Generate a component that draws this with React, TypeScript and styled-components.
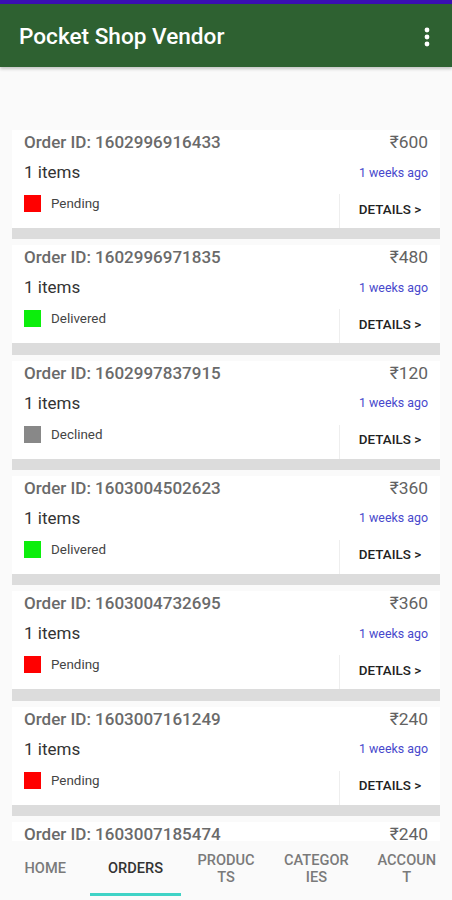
import React from 'react';
import styled, { createGlobalStyle } from 'styled-components';

const GlobalStyle = createGlobalStyle`
    html, body {
        margin: 0;
        padding: 0;
        background: #fafafa;
        font-family: Roboto, "Liberation Sans", sans-serif;
    }
    * { box-sizing: border-box; }
`

const Screen = styled.div`
    width: 452px;
    height: 900px;
    display: flex;
    flex-direction: column;
    background: #fafafa;
    overflow: hidden;
`

const StatusBar = styled.div`
    height: 4px;
    background: #3a0fb3;
    flex-shrink: 0;
`

const AppBar = styled.header`
    height: 63px;
    flex-shrink: 0;
    background: #2e6131;
    display: flex;
    align-items: center;
    justify-content: space-between;
    padding: 2px 21px 0 19px;
    box-shadow: 0 2px 3px rgba(0, 0, 0, 0.22);
    position: relative;
    z-index: 1;
`

const Title = styled.h1`
    margin: 0;
    color: #fff;
    font-size: 22.6px;
    font-weight: 500;
`

const List = styled.main`
    flex: 1;
    overflow: hidden;
    padding: 57px 12px 0;
`

const Card = styled.div`
    background: #fff;
`

const Row = styled.div<{ $gap: number }>`
    display: flex;
    justify-content: space-between;
    align-items: center;
    height: 24px;
    padding: 0 12px;
    margin-top: ${({ $gap }) => $gap}px;
`

const OrderId = styled.span`
    font-size: 17px;
    font-weight: 500;
    color: #6a6a6a;
`

const Price = styled.span`
    font-size: 17.4px;
    color: #626262;
`

const Items = styled.span`
    font-size: 17px;
    color: #333;
`

const Ago = styled.span`
    font-size: 12.4px;
    color: #4848cc;
`

const Footer = styled.div`
    display: flex;
    justify-content: space-between;
    height: 34px;
    margin-top: 10px;
`

const Status = styled.div`
    display: flex;
    align-items: center;
    gap: 10px;
    padding: 1px 0 0 12px;
    height: 18px;
    font-size: 13.4px;
    color: #444;
`

const Swatch = styled.span<{ $color: string }>`
    width: 17px;
    height: 17px;
    background: ${({ $color }) => $color};
`

const DetailsButton = styled.button`
    width: 101px;
    height: 100%;
    border: none;
    border-left: 1px solid #eeeeee;
    background: transparent;
    padding: 0 0 4px;
    font-family: inherit;
    font-size: 13.4px;
    font-weight: 500;
    color: #222;
    cursor: pointer;
`

const Separator = styled.div`
    height: 11.33px;
    background: #dcdcdc;
`

const BottomNav = styled.nav`
    height: 59px;
    flex-shrink: 0;
    background: #fafafa;
    display: grid;
    grid-template-columns: repeat(5, 1fr);
    padding-bottom: 4px;
`

const Tab = styled.div<{ $active?: boolean }>`
    display: flex;
    align-items: center;
    justify-content: center;
    text-align: center;
    font-size: 14.6px;
    font-weight: 500;
    line-height: 17px;
    color: ${({ $active }) => ($active ? '#333' : '#7a7a7a')};
    border-bottom: 3px solid ${({ $active }) => ($active ? '#3fd3c6' : 'transparent')};
    padding-top: 3px;
`

const Kebab = () => (
    <svg width="8" height="22" viewBox="0 0 8 22">
        <circle cx="4" cy="4" r="2.4" fill="#fff" />
        <circle cx="4" cy="11" r="2.4" fill="#fff" />
        <circle cx="4" cy="18" r="2.4" fill="#fff" />
    </svg>
);

const statusColors: Record<string, string> = {
    Pending: '#ff0000',
    Delivered: '#0cee0c',
    Declined: '#888888',
};

const orders = [
    { id: '1602996916433', price: 600, status: 'Pending' },
    { id: '1602996971835', price: 480, status: 'Delivered' },
    { id: '1602997837915', price: 120, status: 'Declined' },
    { id: '1603004502623', price: 360, status: 'Delivered' },
    { id: '1603004732695', price: 360, status: 'Pending' },
    { id: '1603007161249', price: 240, status: 'Pending' },
    { id: '1603007185474', price: 240, status: 'Pending' },
];

const tabs = [
    { label: 'HOME' },
    { label: 'ORDERS', active: true },
    { label: ['PRODUC', 'TS'] },
    { label: ['CATEGOR', 'IES'] },
    { label: ['ACCOUN', 'T'] },
];

const App = () => {
    return (
        <>
            <GlobalStyle />
            <Screen>
                <StatusBar />
                <AppBar>
                    <Title>Pocket Shop Vendor</Title>
                    <Kebab />
                </AppBar>
                <List>
                    {orders.map((order) => (
                        <Card key={order.id}>
                            <Row $gap={6}>
                                <OrderId>Order ID: {order.id}</OrderId>
                                <Price>₹{order.price}</Price>
                            </Row>
                            <Row $gap={6}>
                                <Items>1 items</Items>
                                <Ago>1 weeks ago</Ago>
                            </Row>
                            <Footer>
                                <Status>
                                    <Swatch $color={statusColors[order.status]} />
                                    {order.status}
                                </Status>
                                <DetailsButton>DETAILS &gt;</DetailsButton>
                            </Footer>
                            <Separator />
                        </Card>
                    ))}
                </List>
                <BottomNav>
                    {tabs.map((tab, i) => (
                        <Tab key={i} $active={tab.active}>
                            {Array.isArray(tab.label) ? (
                                <span>{tab.label[0]}<br />{tab.label[1]}</span>
                            ) : (
                                tab.label
                            )}
                        </Tab>
                    ))}
                </BottomNav>
            </Screen>
        </>
    );
};

export default App;
